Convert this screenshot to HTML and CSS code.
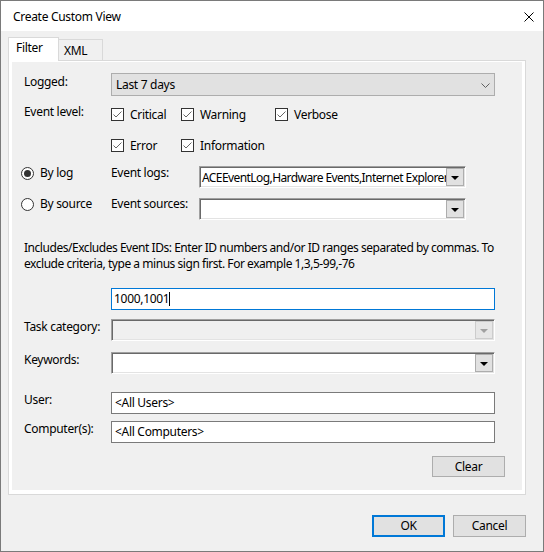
FILE: index.html
```html
<!DOCTYPE html>
<html>
<head>
<meta charset="utf-8">
<title>Create Custom View</title>
<link rel="stylesheet" href="styles.css">
</head>
<body>
<div class="window">
  <div class="titlebar">
    <span class="title">Create Custom View</span>
    <svg class="close" width="10" height="10" viewBox="0 0 10 10"><path d="M0.5 0.5 L9.5 9.5 M9.5 0.5 L0.5 9.5" stroke="#000" stroke-width="1" fill="none"/></svg>
  </div>
  <div class="tabs">
    <div class="tab active">Filter</div>
    <div class="tab inactive">XML</div>
  </div>
  <div class="panel">
    <div class="page">
      <div class="row r-logged">
        <div class="lab">Logged:</div>
        <div class="combo-modern"><span>Last 7 days</span><svg class="chev" width="9" height="5" viewBox="0 0 9 5"><polyline points="0.5,0.5 4.5,4.5 8.5,0.5" fill="none" stroke="#606060" stroke-width="1"/></svg></div>
      </div>
      <div class="row r-level">
        <div class="lab">Event level:</div>
        <div class="checks">
          <div class="chk"><span class="box"><svg width="11" height="11" viewBox="0 0 11 11"><polyline points="1.5,5.5 4,8 9.5,2.5" fill="none" stroke="#666" stroke-width="1"/></svg></span><span>Critical</span></div>
          <div class="chk"><span class="box"><svg width="11" height="11" viewBox="0 0 11 11"><polyline points="1.5,5.5 4,8 9.5,2.5" fill="none" stroke="#666" stroke-width="1"/></svg></span><span>Warning</span></div>
          <div class="chk"><span class="box"><svg width="11" height="11" viewBox="0 0 11 11"><polyline points="1.5,5.5 4,8 9.5,2.5" fill="none" stroke="#666" stroke-width="1"/></svg></span><span>Verbose</span></div>
          <div class="chk"><span class="box"><svg width="11" height="11" viewBox="0 0 11 11"><polyline points="1.5,5.5 4,8 9.5,2.5" fill="none" stroke="#666" stroke-width="1"/></svg></span><span>Error</span></div>
          <div class="chk"><span class="box"><svg width="11" height="11" viewBox="0 0 11 11"><polyline points="1.5,5.5 4,8 9.5,2.5" fill="none" stroke="#666" stroke-width="1"/></svg></span><span>Information</span></div>
        </div>
      </div>
      <div class="row r-bylog">
        <div class="rcell"><span class="radio on"></span><span>By log</span></div>
        <div class="sublab">Event logs:</div>
        <div class="combo3d c-small c-top1"><span class="txt tight">ACEEventLog,Hardware Events,Internet Explorer</span><span class="ddbtn"><span class="tri"></span></span></div>
      </div>
      <div class="row r-bysource">
        <div class="rcell"><span class="radio"></span><span>By source</span></div>
        <div class="sublab">Event sources:</div>
        <div class="combo3d c-small c-top2"><span class="txt"></span><span class="ddbtn"><span class="tri"></span></span></div>
      </div>
      <div class="desc">Includes/Excludes Event IDs: Enter ID numbers and/or ID ranges separated by commas. To<br>exclude criteria, type a minus sign first. For example 1,3,5-99,-76</div>
      <div class="idbox">1000,1001<span class="caret"></span></div>
      <div class="row r-task">
        <div class="lab">Task category:</div>
        <div class="combo3d c-wide disabled"><span class="txt"></span><span class="ddbtn"><span class="tri"></span></span></div>
      </div>
      <div class="row r-keywords">
        <div class="lab">Keywords:</div>
        <div class="combo3d c-wide"><span class="txt"></span><span class="ddbtn"><span class="tri"></span></span></div>
      </div>
      <div class="row r-user">
        <div class="lab">User:</div>
        <div class="textbox">&lt;All Users&gt;</div>
      </div>
      <div class="row r-computer">
        <div class="lab">Computer(s):</div>
        <div class="textbox">&lt;All Computers&gt;</div>
      </div>
      <div class="clear-row"><button class="btn">Clear</button></div>
    </div>
  </div>
  <div class="footer">
    <button class="btn big default">OK</button>
    <button class="btn big">Cancel</button>
  </div>
</div>
</body>
</html>
```

FILE: styles.css
```css
* { box-sizing: border-box; }
html, body { margin: 0; padding: 0; }
body {
  width: 544px;
  height: 552px;
  overflow: hidden;
  background: #f0f0f0;
  font-family: "Noto Sans", "Open Sans", sans-serif;
  font-size: 12px;
  line-height: 16px;
  letter-spacing: -0.3px;
  color: #000;
}
.window {
  width: 544px;
  height: 552px;
  border: 1px solid #7a7a7a;
  background: #f0f0f0;
  display: flex;
  flex-direction: column;
}
.titlebar {
  height: 30px;
  flex: none;
  background: #fff;
  display: flex;
  align-items: center;
  justify-content: space-between;
  padding: 1px 9px 0 12px;
}
.close { display: block; }

.tabs {
  display: flex;
  align-items: flex-end;
  height: 23px;
  margin: 6px 0 0 7px;
  position: relative;
  z-index: 1;
  flex: none;
}
.tab {
  border: 1px solid #d9d9d9;
  border-bottom: none;
  white-space: nowrap;
}
.tab.active {
  width: 51px;
  height: 24px;
  margin-bottom: -1px;
  background: #fff;
  padding: 2px 0 0 7px;
}
.tab.inactive {
  width: 44px;
  height: 21px;
  border-left: none;
  background: #f0f0f0;
  padding: 3px 0 0 5px;
}

.panel {
  width: 518px;
  height: 435px;
  flex: none;
  margin-left: 7px;
  border: 1px solid #d9d9d9;
  background: #fff;
  padding: 1px 3px 4px 3px;
  display: flex;
}
.page {
  flex: 1;
  background: #f0f0f0;
  display: flex;
  flex-direction: column;
}

.row { display: flex; align-items: flex-start; }
.lab { width: 99px; flex: none; padding-left: 12px; white-space: nowrap; }

.r-logged { margin-top: 11px; }
.r-logged .lab { padding-top: 1px; }
.combo-modern {
  width: 384px;
  height: 23px;
  border: 1px solid #adadad;
  background: #e1e1e1;
  display: flex;
  align-items: center;
  justify-content: space-between;
  padding: 1px 4px 0 4px;
}
.chev { display: block; }

.r-level { margin-top: 7px; }
.r-level .lab { padding-top: 1px; }
.checks {
  display: grid;
  grid-template-columns: 70px 94px auto;
  row-gap: 15px;
  padding-top: 4px;
}
.chk { display: flex; gap: 6px; white-space: nowrap; }
.box {
  width: 13px;
  height: 13px;
  flex: none;
  margin-top: 1px;
  border: 1px solid #333;
  background: #fff;
}
.box svg { display: block; }

.r-bylog { margin-top: 11px; }
.r-bysource { margin-top: 8px; }
.rcell {
  width: 99px;
  flex: none;
  padding-left: 9px;
  display: flex;
  gap: 6px;
  white-space: nowrap;
}
.radio {
  width: 13px;
  height: 13px;
  flex: none;
  margin-top: 2px;
  border: 1px solid #333;
  border-radius: 50%;
  background: #fff;
  position: relative;
}
.radio.on::after {
  content: "";
  position: absolute;
  left: 2px;
  top: 2px;
  width: 7px;
  height: 7px;
  border-radius: 50%;
  background: #333;
}
.sublab { width: 88px; flex: none; white-space: nowrap; }

.combo3d {
  height: 22px;
  border: 1px solid;
  border-color: #a0a0a0 #ffffff #ffffff #a0a0a0;
  box-shadow: inset 1px 1px #696969, inset -1px -1px #e3e3e3;
  background: #fff;
  padding: 1px;
  display: flex;
  align-items: center;
}
.c-small { width: 267px; }
.c-top1 { margin-top: 1px; }
.c-top2 { margin-top: 2px; }
.c-wide { width: 384px; }
.combo3d .txt {
  flex: 1;
  min-width: 0;
  overflow: hidden;
  white-space: nowrap;
  padding-left: 1px;
  padding-top: 1px;
}
.combo3d .txt.tight { letter-spacing: -0.58px; }
.ddbtn {
  width: 18px;
  height: 18px;
  flex: none;
  border: 1px solid #adadad;
  background: #e1e1e1;
  display: flex;
  align-items: center;
  justify-content: center;
}
.tri {
  width: 0;
  height: 0;
  border-left: 4px solid transparent;
  border-right: 4px solid transparent;
  border-top: 4px solid #000;
  margin-top: 2px;
}
.combo3d.disabled { background: #f0f0f0; }
.combo3d.disabled .ddbtn { border-color: #cccccc; background: #e6e6e6; }
.combo3d.disabled .tri { border-top-color: #a0a0a0; }

.desc {
  margin-top: 20px;
  padding-left: 12px;
  white-space: nowrap;
  letter-spacing: -0.46px;
  line-height: 15.5px;
}

.idbox {
  margin: 17px 0 0 99px;
  width: 384px;
  height: 22px;
  border: 1px solid #0078d7;
  background: #fff;
  padding: 2px 2px 0 2px;
  white-space: nowrap;
  display: flex;
  align-items: flex-start;
}
.caret {
  display: inline-block;
  width: 1px;
  height: 14px;
  margin-top: 1px;
  background: #000;
}

.r-task { margin-top: 9px; }
.r-keywords { margin-top: 11px; }
.r-user { margin-top: 18px; }
.r-computer { margin-top: 7px; }
.textbox {
  width: 384px;
  height: 22px;
  border: 1px solid #7a7a7a;
  background: #fff;
  padding: 2px 3px 0 3px;
  white-space: nowrap;
}

.clear-row {
  margin-top: 13px;
  display: flex;
  justify-content: flex-end;
  padding-right: 17px;
}
.btn {
  width: 73px;
  height: 21px;
  margin: 0;
  padding: 0;
  border: 1px solid #adadad;
  background: #e1e1e1;
  font-family: inherit;
  font-size: 12px;
  line-height: 16px;
  letter-spacing: -0.3px;
  color: #000;
}
.btn.big { height: 22px; }
.btn.default { border: 2px solid #0078d7; }

.footer {
  display: flex;
  justify-content: flex-end;
  gap: 8px;
  margin-top: 20px;
  padding-right: 17px;
  flex: none;
}
```
